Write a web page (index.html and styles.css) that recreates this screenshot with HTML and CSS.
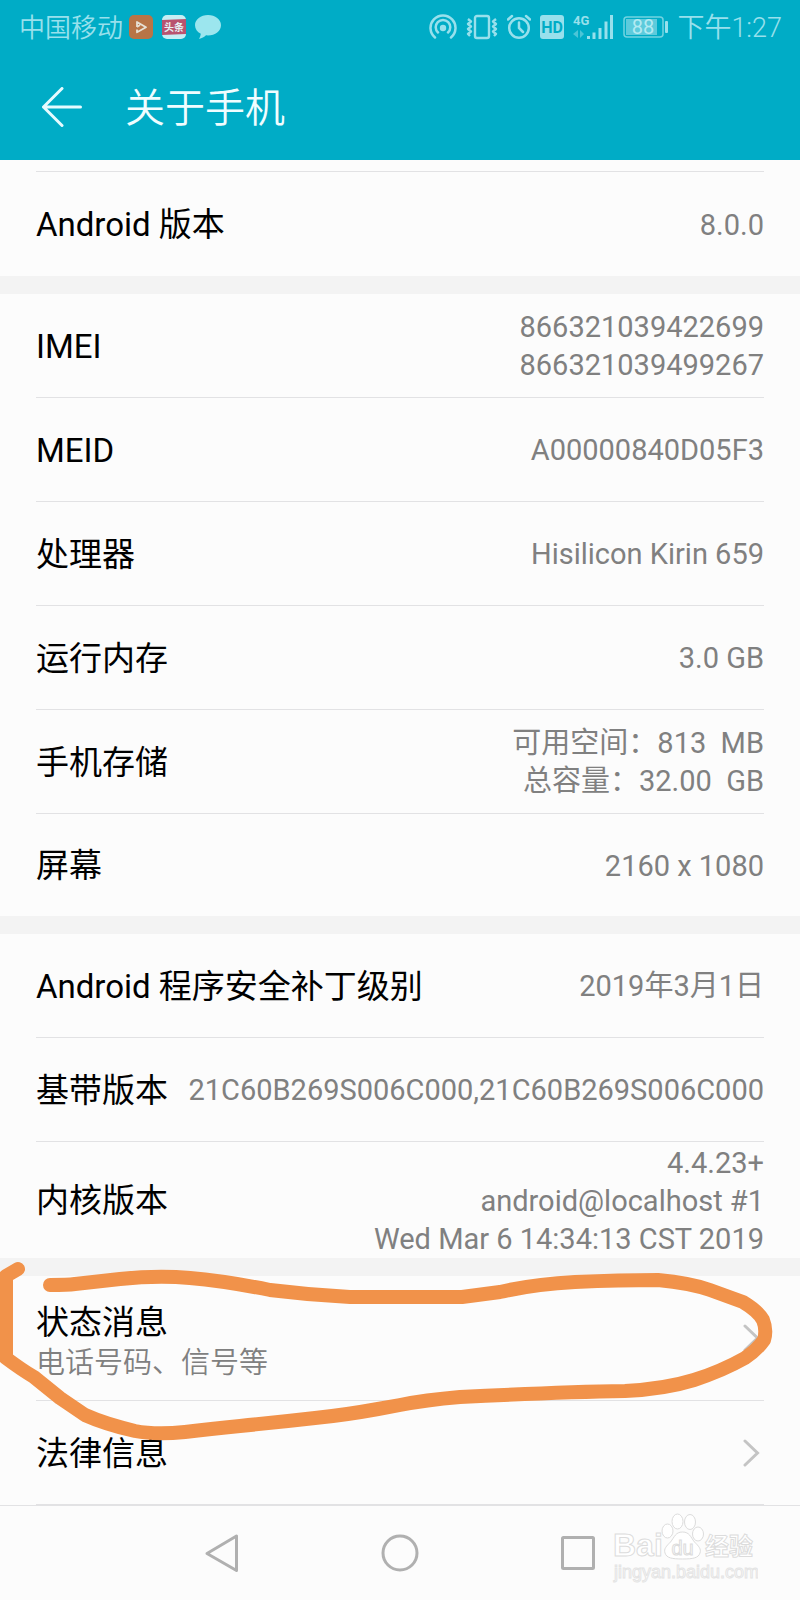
FILE: index.html
```html
<!DOCTYPE html>
<html lang="zh-CN">
<head>
<meta charset="utf-8">
<meta name="viewport" content="width=device-width, initial-scale=1">
<title>关于手机</title>
<link rel="stylesheet" href="styles.css">
</head>
<body>
<div class="phone">
  <header class="top">
    <div class="status-bar">
      <span class="carrier">中国移动</span>
      <div class="notices">
        <svg class="icon" width="24" height="24" viewBox="0 0 24 24" aria-hidden="true">
          <rect width="24" height="24" rx="5" fill="#b87446"/>
          <path d="M8 12V7l9 5.200-9 5V14.500M8 12l3-2" fill="none" stroke="#e6e0d4" stroke-width="1.800" stroke-linejoin="round"/>
        </svg>
        <svg class="icon" width="24" height="24" viewBox="0 0 24 24" aria-hidden="true">
          <rect width="24" height="24" rx="5" fill="#c6eef4"/>
          <path d="M0 5l24-1v15L0 20z" fill="#b9536f"/>
          <text class="badge-text" x="12" y="16" text-anchor="middle">头条</text>
        </svg>
        <svg class="icon" width="26" height="24" viewBox="0 0 26 24" aria-hidden="true">
          <path d="M13 0C5.800 0 0 4.500 0 10.200c0 3.600 2.200 6.800 5.800 8.600-.2 1.800-.8 3.500-1.800 5.200 3-.6 5.200-2 7-3.700 8.500.8 15-4 15-10.100C26 4.500 20.200 0 13 0z" fill="#9ce6ee"/>
        </svg>
      </div>
      <div class="indicators">
        <svg width="28" height="26" viewBox="0 0 28 26" fill="none" stroke="#98e0ec" stroke-width="2.500" stroke-linecap="round" aria-hidden="true">
          <path d="M6 23.500a12.500 12.500 0 1 1 16 0M9 18.500a7.300 7.300 0 1 1 10 0"/>
          <circle cx="14" cy="14" r="3.200" fill="#98e0ec" stroke="none"/>
        </svg>
        <svg width="32" height="26" viewBox="0 0 32 26" fill="none" stroke="#98e0ec" stroke-width="2.400" stroke-linejoin="round" aria-hidden="true">
          <rect x="9" y="2" width="14" height="22" rx="2"/>
          <path d="M2 5l3 2.500L2 10l3 2.500L2 15l3 2.500L2 20l2 2M30 5l-3 2.500 3 2.500-3 2.500 3 2.500-3 2.500 3 2.500-2 2"/>
        </svg>
        <svg width="24" height="26" viewBox="0 0 24 26" fill="none" stroke="#98e0ec" stroke-width="2.500" stroke-linecap="round" aria-hidden="true">
          <circle cx="12" cy="14" r="9.800"/>
          <path d="M12 8.500V14l4 4M1 5.500L5 2M23 5.500L19 2"/>
        </svg>
        <svg width="24" height="26" viewBox="0 0 24 26" aria-hidden="true">
          <rect y="1" width="24" height="24" rx="3" fill="#98e0ec"/>
          <text class="hd-text" x="12" y="19" text-anchor="middle">HD</text>
        </svg>
        <svg width="40" height="26" viewBox="0 0 40 26" aria-hidden="true">
          <text class="net-text" x="0" y="11">4G</text>
          <path d="M0 20l5-4v8zM11 20l-4-4v8z" fill="#4cc5d7"/>
          <path d="M15.500 25v-3M21 25v-6.500M27 25V14M33 25V7.500M38.500 25V1" stroke="#98e0ec" stroke-width="3"/>
        </svg>
        <svg class="battery" width="45" height="26" viewBox="0 0 45 26" aria-hidden="true">
          <rect x="1" y="3" width="39" height="20" rx="3" fill="none" stroke="#72d3e1" stroke-width="1.500"/>
          <rect x="3" y="5" width="31" height="16" fill="#5dcbdc"/>
          <rect x="42" y="7" width="3" height="12" rx="1" fill="#98e0ec"/>
          <text class="battery-text" x="20" y="20" text-anchor="middle">88</text>
        </svg>
        <time class="clock">下午1:27</time>
      </div>
    </div>
    <div class="app-bar">
      <button class="back" type="button" aria-label="返回">
        <svg width="40" height="40" viewBox="0 0 40 40" fill="none" stroke="#e6fbff" stroke-width="3" stroke-linecap="round" stroke-linejoin="round" aria-hidden="true">
          <path d="M20 1.500L1.500 20 20 38.500M1.500 20h37"/>
        </svg>
      </button>
      <h1 class="title">关于手机</h1>
    </div>
  </header>

  <main class="settings">
    <div class="previous"></div>
    <dl class="group">
      <div class="row"><dt>Android 版本</dt><dd>8.0.0</dd></div>
    </dl>
    <dl class="group">
      <div class="row"><dt>IMEI</dt><dd>866321039422699<br>866321039499267</dd></div>
      <div class="row"><dt>MEID</dt><dd>A00000840D05F3</dd></div>
      <div class="row"><dt>处理器</dt><dd>Hisilicon Kirin 659</dd></div>
      <div class="row"><dt>运行内存</dt><dd>3.0 GB</dd></div>
      <div class="row"><dt>手机存储</dt><dd>可用空间：813&nbsp; MB<br>总容量：32.00&nbsp; GB</dd></div>
      <div class="row"><dt>屏幕</dt><dd>2160 x 1080</dd></div>
    </dl>
    <dl class="group">
      <div class="row"><dt>Android 程序安全补丁级别</dt><dd>2019年3月1日</dd></div>
      <div class="row"><dt>基带版本</dt><dd>21C60B269S006C000,21C60B269S006C000</dd></div>
      <div class="row row-tall"><dt>内核版本</dt><dd>4.4.23+<br>android@localhost #1<br>Wed Mar 6 14:34:13 CST 2019</dd></div>
    </dl>
    <div class="group links">
      <button class="row row-link row-double" type="button">
        <span class="stack"><span class="label">状态消息</span><span class="hint">电话号码、信号等</span></span>
        <svg class="chevron" width="17" height="28" viewBox="0 0 17 28" aria-hidden="true"><path d="M2 2l12.500 12L2 26"/></svg>
      </button>
      <button class="row row-link" type="button">
        <span class="label">法律信息</span>
        <svg class="chevron" width="17" height="28" viewBox="0 0 17 28" aria-hidden="true"><path d="M2 2l12.500 12L2 26"/></svg>
      </button>
      <svg class="marker" viewBox="0 1260 800 190" aria-hidden="true">
        <path d="M50 1285C58 1285 68 1285 75 1284L120 1279Q158 1275 190 1278Q225 1281 270 1290Q310 1295 350 1297H462L500 1292Q535 1284 575 1282Q620 1280 658 1280Q690 1283 710 1290L743 1302Q758 1311 763 1320Q767 1330 764 1340Q757 1350 745 1358Q722 1371 694 1380Q665 1389 625 1391Q560 1392 460 1397Q425 1400 400 1405L378 1409Q345 1415 315 1418Q280 1422 240 1426Q210 1429 185 1432Q155 1435 135 1431Q105 1424 85 1415L60 1398L34 1377Q22 1370 6 1358V1276L18 1269"/>
      </svg>
    </div>
  </main>

  <nav class="nav-bar" aria-label="系统导航">
    <button type="button" aria-label="返回">
      <svg width="40" height="40" viewBox="0 0 40 40" aria-hidden="true"><path d="M34.500 3v34.500L5 20.500z"/></svg>
    </button>
    <button type="button" aria-label="主屏幕">
      <svg width="40" height="40" viewBox="0 0 40 40" aria-hidden="true"><circle cx="20" cy="20" r="17"/></svg>
    </button>
    <button type="button" aria-label="最近任务">
      <svg width="40" height="40" viewBox="0 0 40 40" aria-hidden="true"><rect x="4.500" y="4.500" width="31" height="31" rx="1"/></svg>
    </button>
    <svg class="watermark" width="146" height="76" viewBox="0 0 146 76" aria-hidden="true">
      <text class="mark-brand" x="1" y="46">Bai</text>
      <ellipse cx="55.500" cy="21" rx="5.500" ry="7"/>
      <ellipse cx="65.500" cy="11.500" rx="5.500" ry="7.500"/>
      <ellipse cx="78" cy="12" rx="5.500" ry="7.500"/>
      <ellipse cx="86" cy="24" rx="5.500" ry="7"/>
      <path d="M70.500 22c7 0 8 5 12 10 4 4 7 7 5.500 11-1.500 5-7 6-17.500 6s-16-1-17.500-6c-1.500-4 1.500-7 5.500-11 4-5 5-10 12-10z"/>
      <text class="mark-du" x="70.500" y="45" text-anchor="middle">du</text>
      <text class="mark-cjk" x="93" y="45">经验</text>
      <text class="mark-url" x="2" y="68">jingyan.baidu.com</text>
    </svg>
  </nav>
</div>
</body>
</html>
```
FILE: styles.css
```css
* {
  box-sizing: border-box;
}

body {
  margin: 0;
  background: #fcfcfc;
  color: #000;
  font-family: Roboto, "Noto Sans CJK SC", sans-serif;
}

button {
  padding: 0;
  border: 0;
  background: none;
  color: inherit;
  font: inherit;
  text-align: left;
}

svg {
  display: block;
  flex: none;
}

.phone {
  display: flex;
  flex-direction: column;
  min-height: 100vh;
}

.top {
  background: #00acc6;
}

.status-bar {
  display: flex;
  align-items: center;
  height: 54px;
  padding: 0 18px 0 19px;
  color: #98e0ec;
  font-size: 26px;
  font-weight: 350;
  line-height: 32px;
  white-space: nowrap;
}

.carrier,
.clock {
  padding-top: 2px;
}

.notices {
  display: flex;
  align-items: center;
  gap: 9px;
  margin-left: 6px;
}

.indicators {
  display: flex;
  align-items: center;
  gap: 9px;
  margin-left: auto;
}

.badge-text {
  fill: #e6f2f4;
  font-size: 10px;
  font-weight: 700;
}

.hd-text {
  fill: #00acc6;
  font-size: 16px;
  font-weight: 700;
}

.net-text {
  fill: #98e0ec;
  font-size: 13px;
  font-weight: 700;
}

.battery {
  margin-left: 1px;
}

.battery-text {
  fill: #b4eaf2;
  font-size: 20px;
  font-weight: 400;
}

.clock {
  font-size: 27px;
}

.app-bar {
  display: flex;
  align-items: center;
  gap: 43px;
  height: 106px;
  padding: 0 42px;
}

.title {
  margin: 0;
  padding-top: 4px;
  color: #f0fdff;
  font-size: 40px;
  font-weight: 350;
  line-height: 48px;
}

.settings {
  flex: 1;
}

.previous {
  height: 12px;
  margin: 0 36px;
  border-bottom: 1px solid #e2e2e4;
}

.group {
  margin: 0;
}

.group + .group {
  border-top: 18px solid #f3f3f3;
}

.row {
  display: flex;
  align-items: center;
  justify-content: space-between;
  gap: 16px;
  min-height: 104px;
  margin: 0 36px;
  border-bottom: 1px solid #e2e2e4;
  font-size: 33px;
  line-height: 40px;
}

dl .row:last-child {
  border-bottom: 0;
}

dl .row + .row:last-child {
  min-height: 102px;
}

dl .row + .row-tall:last-child {
  min-height: 116px;
}

dt {
  flex: none;
  padding-top: 2px;
}

dd {
  margin: 0;
  padding-top: 1px;
  color: #808080;
  font-size: 29px;
  line-height: 38px;
  text-align: right;
}

.links {
  position: relative;
}

.row-link {
  width: calc(100% - 72px);
}

.row-link .label {
  padding-top: 2px;
}

.row-double {
  min-height: 125px;
}

.stack {
  display: flex;
  flex-direction: column;
  padding-top: 8px;
}

.hint {
  color: #808080;
  font-size: 29px;
  font-weight: 350;
}

.chevron {
  margin-right: 4px;
  fill: none;
  stroke: #c4c4c4;
  stroke-width: 3;
  stroke-linecap: round;
}

.marker {
  position: absolute;
  top: -16px;
  left: 0;
  width: 100%;
  overflow: visible;
  pointer-events: none;
}

.marker path {
  fill: none;
  stroke: #f1924a;
  stroke-width: 14;
  stroke-linecap: round;
  stroke-linejoin: round;
}

.nav-bar {
  position: relative;
  display: grid;
  grid-template-columns: repeat(3, 22.25%);
  align-items: center;
  justify-content: center;
  justify-items: center;
  height: 95px;
  border-top: 1px solid #e2e2e4;
}

.nav-bar button path,
.nav-bar button circle,
.nav-bar button rect {
  fill: none;
  stroke: #b0b0b0;
  stroke-width: 3;
  stroke-linejoin: round;
}

.watermark {
  position: absolute;
  right: 42px;
  bottom: 14px;
  fill: #fff;
  stroke: #dcdcdc;
  stroke-width: 1;
}

.mark-brand {
  font-family: "Liberation Sans", sans-serif;
  font-size: 32px;
  font-weight: 700;
}

.mark-du {
  font-family: "Liberation Sans", sans-serif;
  font-size: 20px;
}

.mark-cjk {
  font-size: 24px;
  font-weight: 700;
}

.mark-url {
  font-family: "Liberation Sans", sans-serif;
  font-size: 18px;
  stroke: #e4e4e4;
}
```
